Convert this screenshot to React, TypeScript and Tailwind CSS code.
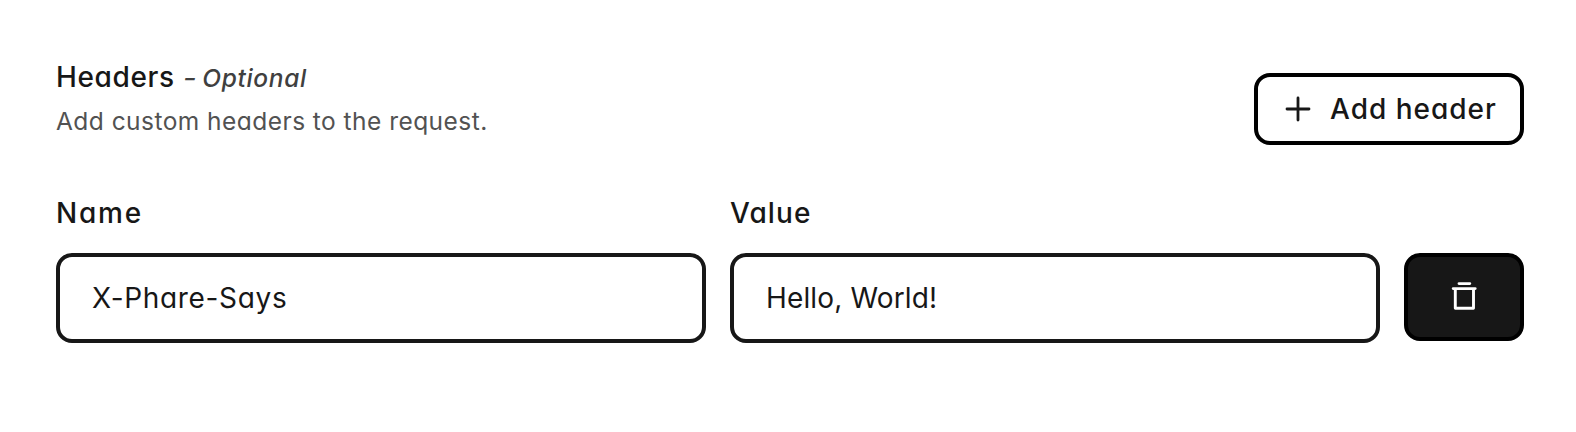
import { useState } from "react";

function PlusIcon() {
  return (
    <svg width="26" height="26" viewBox="0 0 26 26" fill="none" stroke="currentColor" strokeWidth="2.8" strokeLinecap="round">
      <path d="M13 2v22M2 13h22" />
    </svg>
  );
}

function TrashIcon() {
  return (
    <svg width="32" height="32" viewBox="0 0 32 32" fill="none" stroke="currentColor" strokeWidth="2.9" strokeLinecap="round" strokeLinejoin="round">
      <path d="M11 2.6h10.8M5.2 7.6h22M7.3 8v19.3h18.2V8" />
    </svg>
  );
}

function Field({ label, initial, labelClass, inputClass }: { label: string; initial: string; labelClass: string; inputClass: string }) {
  const [value, setValue] = useState(initial);
  return (
    <label className="flex w-[650px] flex-col">
      <span className={"mb-[21px] h-[38px] text-[28px] leading-[38px] font-medium " + labelClass}>{label}</span>
      <input
        value={value}
        onChange={(e) => setValue(e.target.value)}
        className={"h-[90px] w-full rounded-2xl border-4 border-[#171717] bg-white px-8 text-[28px] outline-none " + inputClass}
      />
    </label>
  );
}

export default function App() {
  return (
    <main className="h-[432px] w-[1576px] bg-white pr-[52px] pl-14 pt-[56px] font-['Inter',sans-serif] text-[#171717] [font-feature-settings:'cv11']">
      <header className="flex h-[89px] items-end justify-between">
        <div className="flex h-[89px] flex-col">
          <h2 className="flex h-[43px] items-baseline text-[28px] leading-[43px] font-medium">
            <span className="w-[127px] tracking-[0.65px]">Headers</span>
            <em className="text-[24.5px] tracking-[0.65px] text-[#404040]">
              <span className="inline-block origin-left scale-x-120">-</span> Optional
            </em>
          </h2>
          <p className="mt-[2px] text-[24.5px] leading-[40px] tracking-[0.46px] text-[#525252]">Add custom headers to the request.</p>
        </div>
        <button className="flex h-[72px] w-[270px] items-center rounded-2xl border-4 border-black bg-white pl-[27px] text-[28px] font-medium">
          <PlusIcon />
          <span className="ml-[19px] tracking-[1px] whitespace-nowrap">Add header</span>
        </button>
      </header>
      <div className="mt-[49px] flex gap-6">
        <Field label="Name" initial="X-Phare-Says" labelClass="tracking-[1.8px]" inputClass="tracking-[0.65px]" />
        <Field label="Value" initial="Hello, World!" labelClass="tracking-[1.1px]" inputClass="tracking-[0.15px]" />
        <button aria-label="Remove header" className="mt-[59px] flex h-[88px] w-[120px] items-center justify-center rounded-2xl border-4 border-black bg-[#171717] text-white">
          <TrashIcon />
        </button>
      </div>
    </main>
  );
}
